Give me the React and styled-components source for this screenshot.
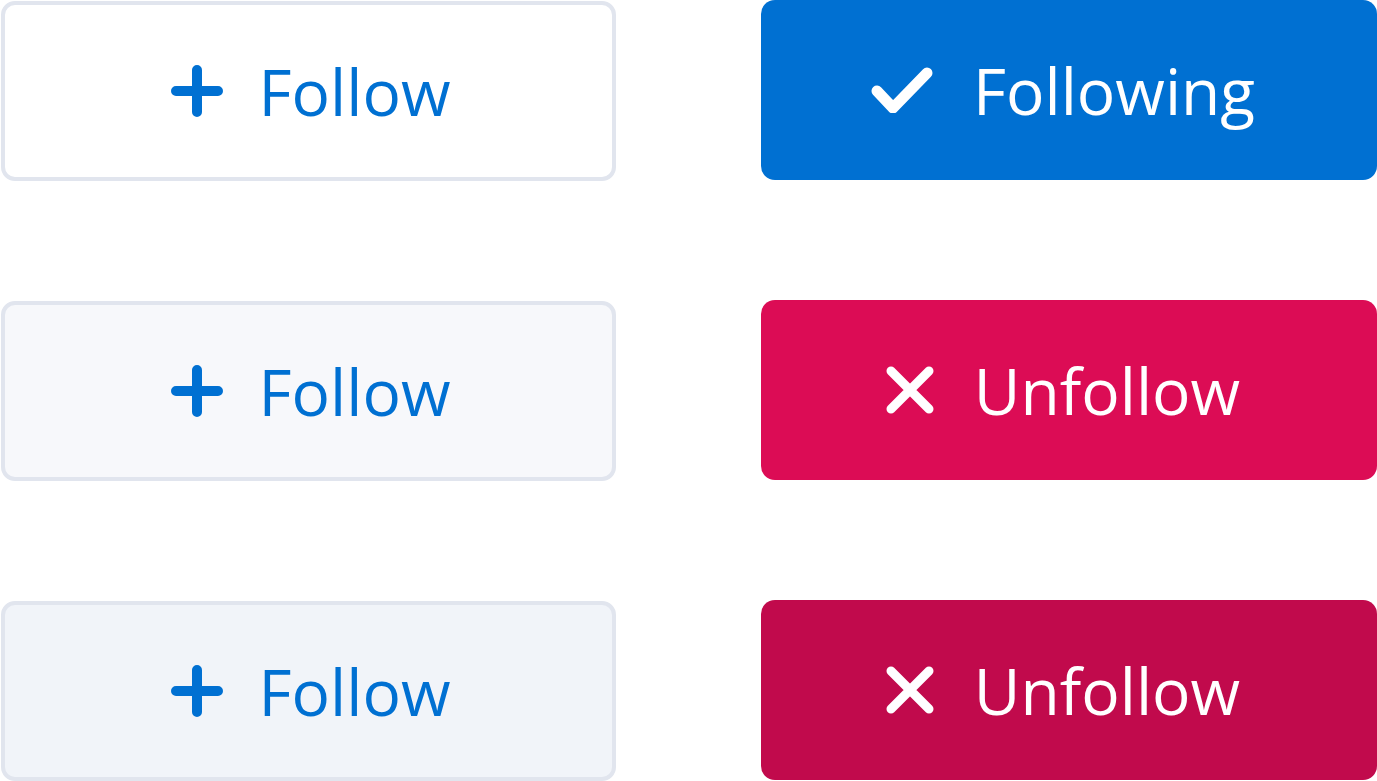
import React from "react";
import styled, { createGlobalStyle } from "styled-components";

const GlobalStyle = createGlobalStyle`
  html, body {
    margin: 0;
    padding: 0;
    background: #ffffff;
    font-family: "Open Sans", "Noto Sans", sans-serif;
  }
`;

const rows = [
  { bg: "#ffffff", danger: "#dc0c55", right: "following" },
  { bg: "#f7f8fb", danger: "#dc0c55", right: "unfollow" },
  { bg: "#f1f4f9", danger: "#c10a4c", right: "unfollow" },
];

function PlusIcon() {
  return (
    <svg width="52" height="52" viewBox="0 0 52 52">
      <path
        d="M26 5 V47 M5 26 H47"
        stroke="#0070d2"
        strokeWidth="10"
        strokeLinecap="round"
        fill="none"
      />
    </svg>
  );
}

function CheckIcon() {
  return (
    <svg width="62" height="46" viewBox="0 0 62 46">
      <path
        d="M6 24 L22 41 L56 6"
        stroke="#fff"
        strokeWidth="11"
        strokeLinecap="round"
        strokeLinejoin="round"
        fill="none"
      />
    </svg>
  );
}

function CloseIcon() {
  return (
    <svg width="48" height="48" viewBox="0 0 48 48">
      <path
        d="M5 5 L43 43 M43 5 L5 43"
        stroke="#fff"
        strokeWidth="9"
        strokeLinecap="round"
        fill="none"
      />
    </svg>
  );
}

export default function App() {
  return (
    <>
      <GlobalStyle />
      <Board>
        {rows.map((row, i) => (
          <React.Fragment key={i}>
            <FollowButton $bg={row.bg}>
              <PlusIcon />
              <Label>Follow</Label>
            </FollowButton>
            {row.right === "following" ? (
              <StateButton $bg="#0070d2" $gap={40}>
                <CheckIcon />
                <Label>Following</Label>
              </StateButton>
            ) : (
              <StateButton $bg={row.danger} $gap={40}>
                <CloseIcon />
                <Label>Unfollow</Label>
              </StateButton>
            )}
          </React.Fragment>
        ))}
      </Board>
    </>
  );
}

const Board = styled.div`
  display: grid;
  grid-template-columns: 615px 616px;
  grid-auto-rows: 180px;
  column-gap: 145px;
  row-gap: 120px;
  padding: 1px 0 0 1px;
`;

const FollowButton = styled.button`
  display: flex;
  align-items: center;
  justify-content: center;
  gap: 36px;
  box-sizing: border-box;
  width: 100%;
  height: 100%;
  margin: 0;
  padding: 0 0 0 4px;
  background: ${(p) => p.$bg};
  border: 4px solid #e1e5ee;
  border-radius: 14px;
  color: #0070d2;
  font-family: inherit;
  cursor: pointer;
`;

const StateButton = styled.button`
  display: flex;
  align-items: center;
  justify-content: center;
  gap: ${(p) => p.$gap}px;
  box-sizing: border-box;
  width: 100%;
  height: 100%;
  margin: -1px 0 0 0;
  padding: 0 12px 0 0;
  background: ${(p) => p.$bg};
  border: none;
  border-radius: 14px;
  color: #ffffff;
  font-family: inherit;
  cursor: pointer;
`;

const Label = styled.span`
  font-size: 64px;
  font-weight: 400;
  line-height: 64px;
  margin-top: 2px;
`;
